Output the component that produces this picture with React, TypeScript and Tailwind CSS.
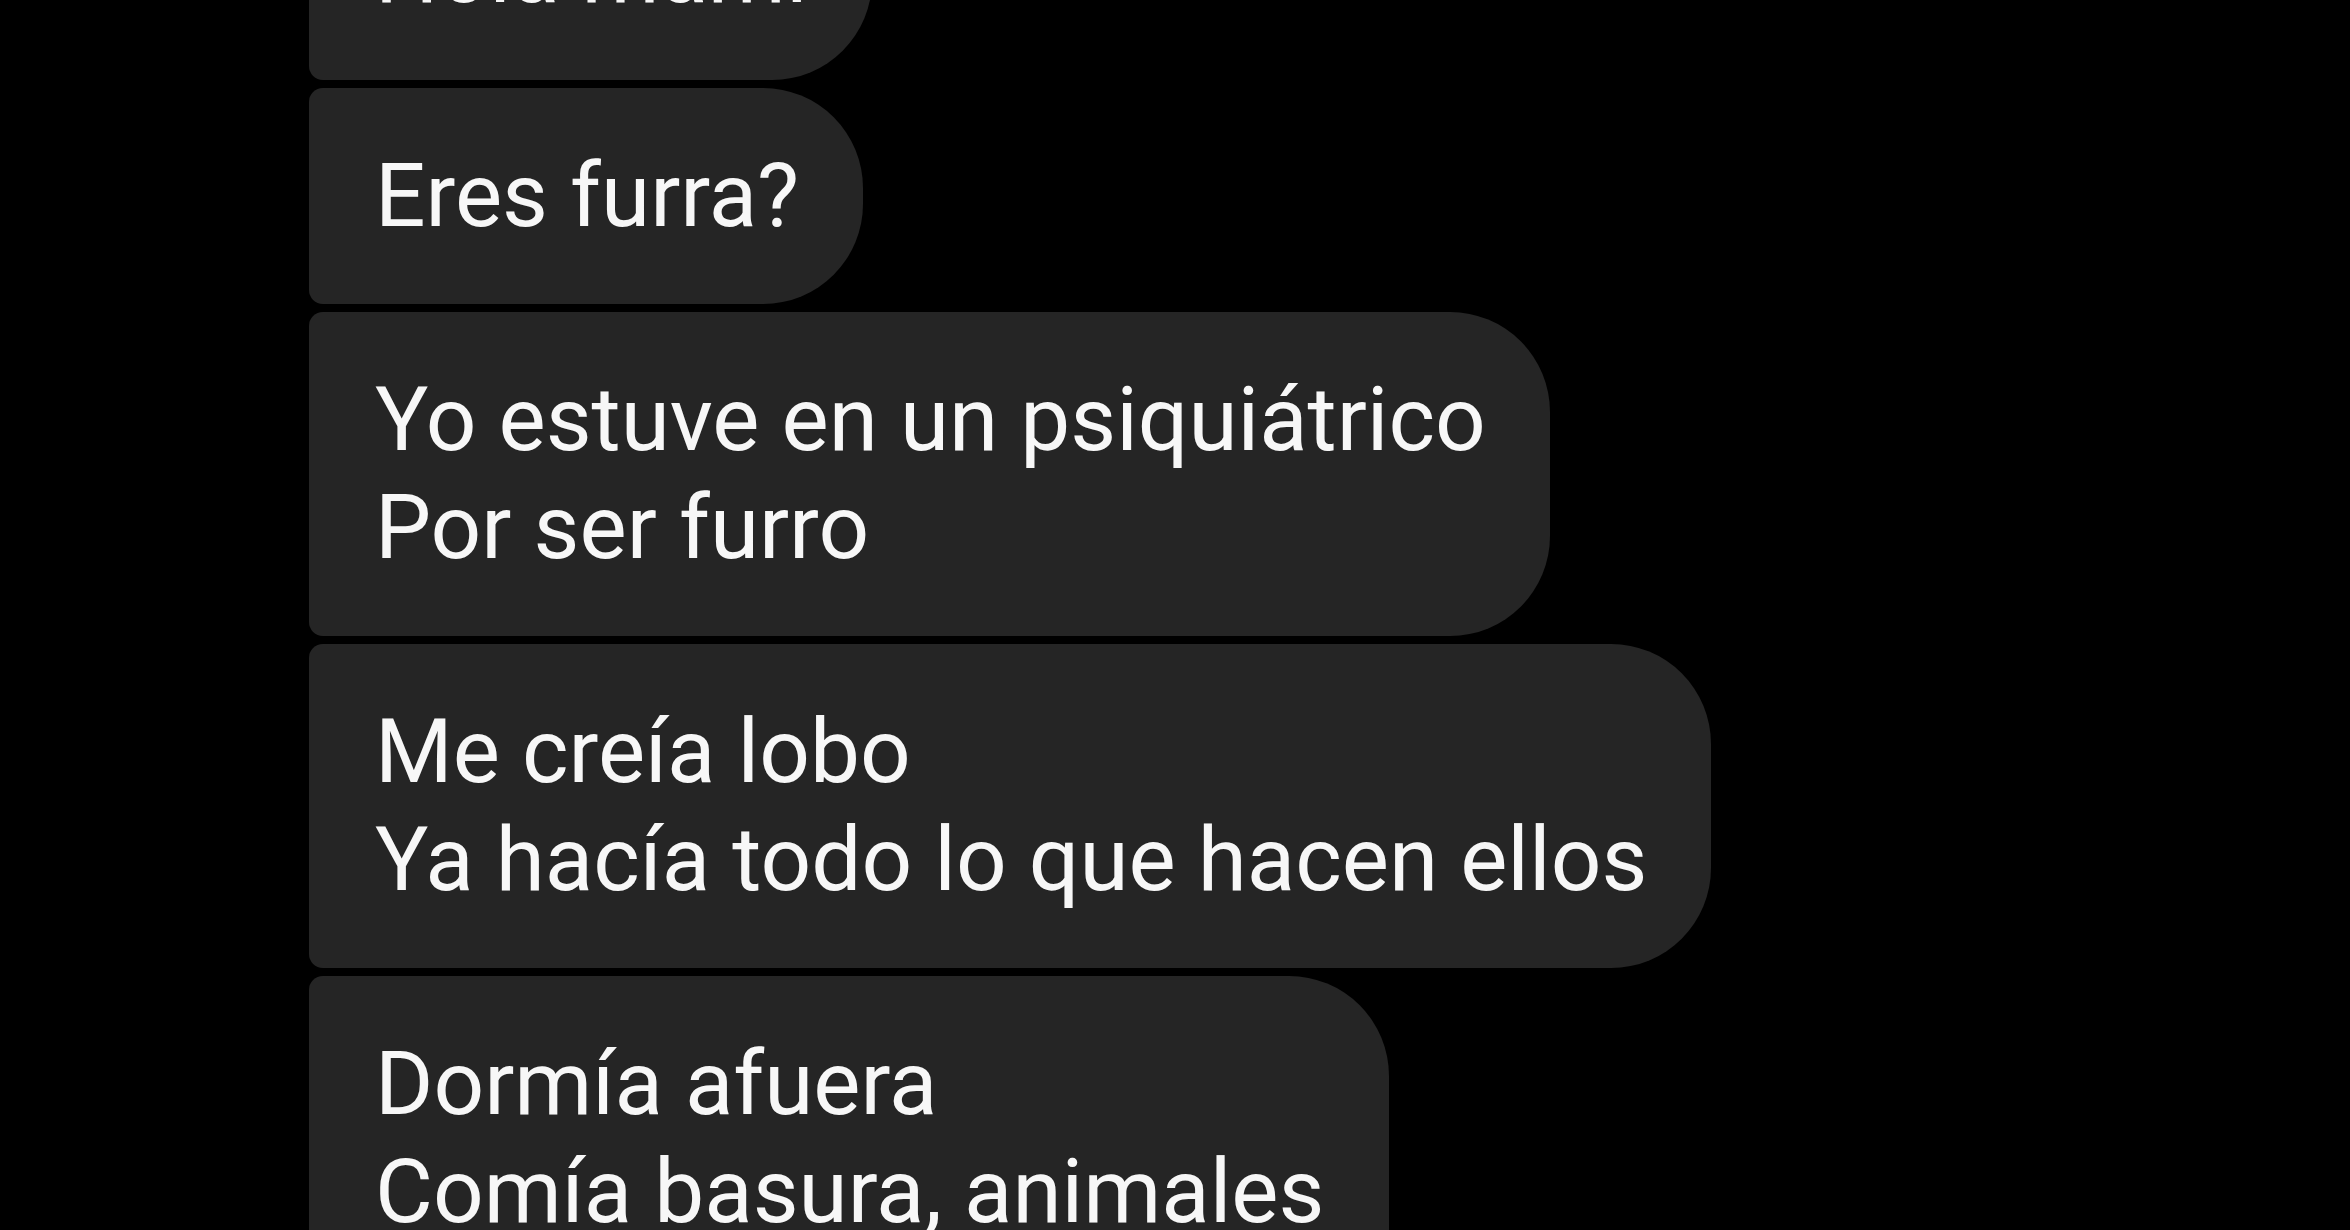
import React from 'react';

const messages: string[][] = [
  ['Hola mami'],
  ['Eres furra?'],
  ['Yo estuve en un psiquiátrico', 'Por ser furro'],
  ['Me creía lobo', 'Ya hacía todo lo que hacen ellos'],
  ['Dormía afuera', 'Comía basura, animales', 'Aullaba a la luna'],
];

function Bubble({ lines }: { lines: string[] }) {
  return (
    <div className="w-fit rounded-l-[14px] rounded-r-[100px] bg-[#252525] py-[54px] pl-[66px] pr-[64px]">
      {lines.map((line) => (
        <p key={line} className="whitespace-nowrap text-[89px] leading-[108px] text-[#f7f7f7]">
          {line}
        </p>
      ))}
    </div>
  );
}

export default function App() {
  return (
    <div
      className="h-[1230px] w-[2350px] overflow-hidden bg-black"
      style={{ fontFamily: 'Roboto, "Noto Sans", sans-serif' }}
    >
      {/* Received messages thread */}
      <div className="-mt-[136px] flex flex-col gap-2 pl-[309px]">
        {messages.map((lines, i) => (
          <Bubble key={i} lines={lines} />
        ))}
      </div>
    </div>
  );
}
